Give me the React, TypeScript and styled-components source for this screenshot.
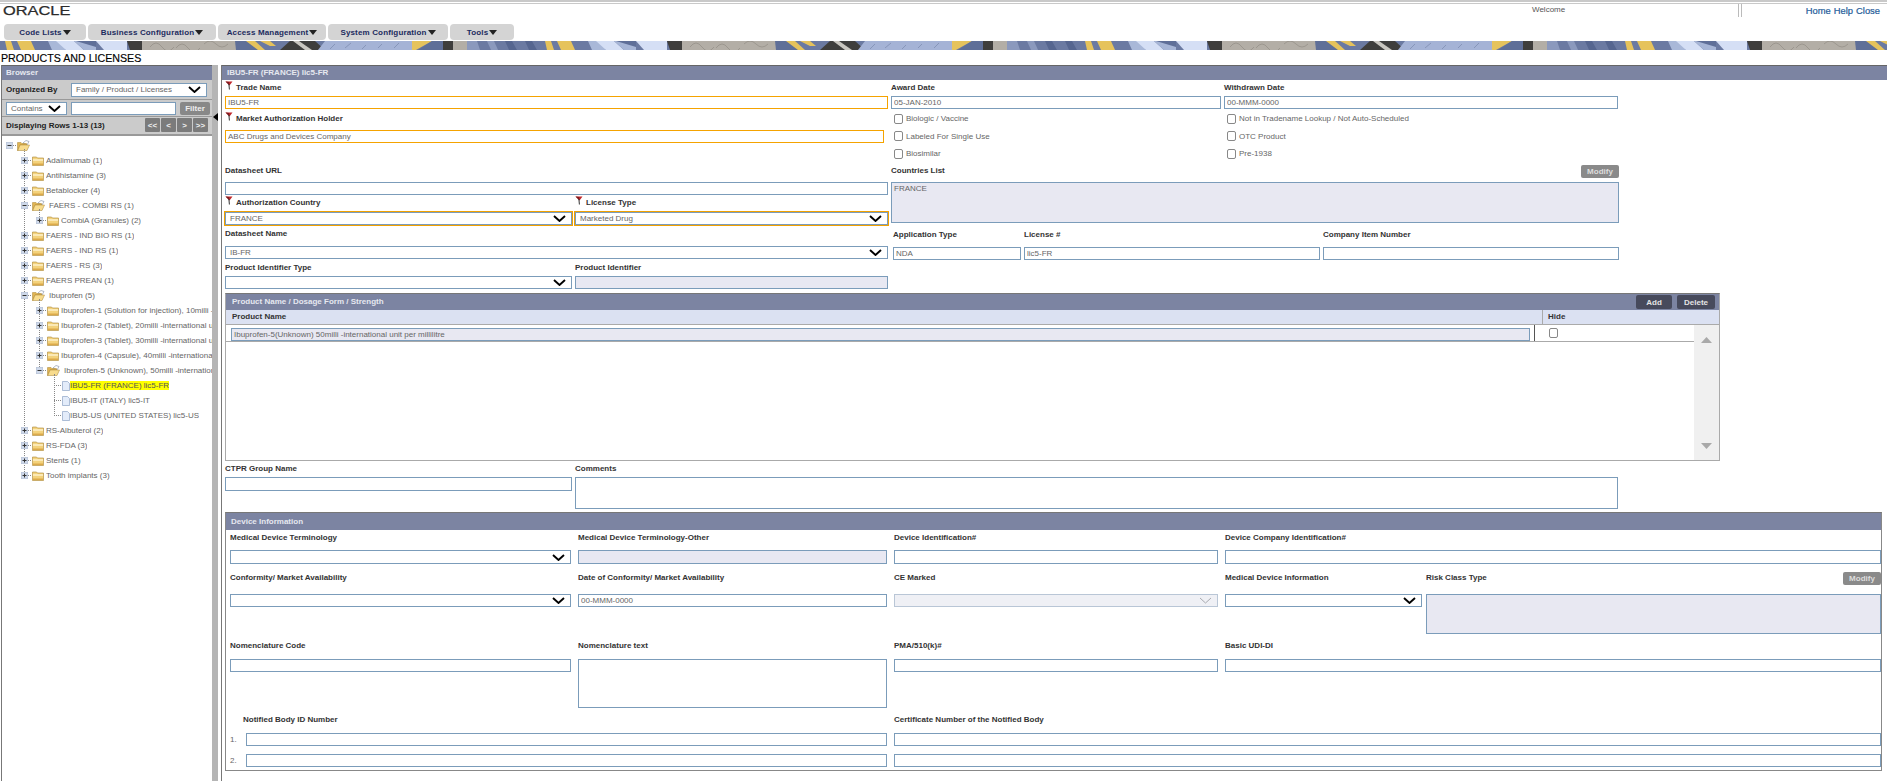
import styled, { createGlobalStyle } from "styled-components"

const GlobalStyle = createGlobalStyle`
    html, body, #root {
        margin: 0;
        height: 100%;
    }

    body {
        background: #fff;
        font-family: "Liberation Sans", Arial, sans-serif;
        font-size: 8px;
        color: #666;
        overflow: hidden;
    }

    * {
        box-sizing: border-box;
    }
`

type TreeNode = {
    label: string
    children?: TreeNode[]
    open?: boolean
    leaf?: boolean
    selected?: boolean
}

const treeData: TreeNode[] = [
    { label: "Adalimumab (1)" },
    { label: "Antihistamine (3)" },
    { label: "Betablocker (4)" },
    {
        label: "FAERS - COMBI RS (1)",
        open: true,
        children: [{ label: "CombiA (Granules) (2)" }],
    },
    { label: "FAERS - IND BIO RS (1)" },
    { label: "FAERS - IND RS (1)" },
    { label: "FAERS - RS (3)" },
    { label: "FAERS PREAN (1)" },
    {
        label: "Ibuprofen (5)",
        open: true,
        children: [
            { label: "Ibuprofen-1 (Solution for injection), 10milli -international unit per millilitre" },
            { label: "Ibuprofen-2 (Tablet), 20milli -international unit per millilitre" },
            { label: "Ibuprofen-3 (Tablet), 30milli -international unit per millilitre" },
            { label: "Ibuprofen-4 (Capsule), 40milli -international unit per millilitre" },
            {
                label: "Ibuprofen-5 (Unknown), 50milli -international unit per millilitre",
                open: true,
                children: [
                    { label: "IBU5-FR (FRANCE) lic5-FR", leaf: true, selected: true },
                    { label: "IBU5-IT (ITALY) lic5-IT", leaf: true },
                    { label: "IBU5-US (UNITED STATES) lic5-US", leaf: true },
                ],
            },
        ],
    },
    { label: "RS-Albuterol (2)" },
    { label: "RS-FDA (3)" },
    { label: "Stents (1)" },
    { label: "Tooth implants (3)" },
]

const menus = [
    { label: "Code Lists", width: 82 },
    { label: "Business Configuration", width: 128 },
    { label: "Access Management", width: 108 },
    { label: "System Configuration", width: 120 },
    { label: "Tools", width: 64 },
]

function Chevron({ muted }: { muted?: boolean }) {
    return (
        <svg width="13" height="7" viewBox="0 0 13 7">
            <path
                d="M1 1 L6.5 6 L12 1"
                fill="none"
                stroke={muted ? "#a8aab0" : "#000"}
                strokeWidth={muted ? 1 : 1.9}
            />
        </svg>
    )
}

function Flag() {
    return (
        <FlagIcon width="8" height="9" viewBox="0 0 8 9">
            <path d="M0.5 0.5 L7.5 0.5 L4.5 4.5 Z" fill="#c0262a" />
            <path d="M0.5 0.5 L4 1 L4.5 4.5 Z" fill="#7b1c1f" />
            <path d="M3.9 3 L4.4 8.5" stroke="#333" strokeWidth="1" />
        </FlagIcon>
    )
}

function Expander({ open }: { open?: boolean }) {
    return (
        <svg width="7" height="7" viewBox="0 0 7 7">
            <rect x="0" y="0" width="7" height="7" rx="1" fill="#cfd9ea" stroke="#a9b6cc" strokeWidth="0.8" />
            <path d="M1.5 3.5 H5.5" stroke="#333" strokeWidth="1" />
            {!open && <path d="M3.5 1.5 V5.5" stroke="#333" strokeWidth="1" />}
        </svg>
    )
}

function FolderIcon({ open }: { open?: boolean }) {
    if (open) {
        return (
            <svg width="13" height="11" viewBox="0 0 13 11">
                <path d="M6 3 L9 0.5 L12 1.5 L10 5 Z" fill="#fff" stroke="#7e8aa3" strokeWidth="0.6" />
                <path d="M0.5 2.5 H4 L5 3.5 H9.5 V5 H3 L1 10.5 H0.5 Z" fill="#e0b452" stroke="#a98434" strokeWidth="0.5" />
                <path d="M3 5 H12.5 L10 10.5 H0.8 Z" fill="#f8dc8e" stroke="#a98434" strokeWidth="0.5" />
            </svg>
        )
    }
    return (
        <svg width="12" height="10" viewBox="0 0 12 10">
            <path d="M0.5 1 H4.5 L5.5 2 H11.5 V9.5 H0.5 Z" fill="#f3d27c" stroke="#a98434" strokeWidth="0.6" />
            <path d="M1 3 H11 V5 H1 Z" fill="#fbe9b6" />
            <path d="M1 7.5 H11 V9 H1 Z" fill="#dcaa4a" />
        </svg>
    )
}

function DocIcon() {
    return (
        <svg width="8" height="10" viewBox="0 0 8 10">
            <path d="M0.5 0.5 H5.5 L7.5 2.5 V9.5 H0.5 Z" fill="#e3ecfa" stroke="#8ea5c6" strokeWidth="0.7" />
        </svg>
    )
}

function TreeBranch({ nodes, level }: { nodes: TreeNode[]; level: number }) {
    // the guide line stops at the last sibling, not at whatever hangs below it
    const tailRows = nodes[nodes.length - 1].children?.length ?? 0

    return (
        <Branch $level={level} $tailRows={tailRows}>
            {nodes.map((node) => (
                <li key={node.label}>
                    <TreeRow>
                        {node.leaf ? (
                            <>
                                <LeafTick />
                                <DocIcon />
                            </>
                        ) : (
                            <>
                                <Expander open={node.open} />
                                <RowTick />
                                <FolderIcon open={node.open} />
                            </>
                        )}
                        <TreeLabel $selected={node.selected} $open={node.open} $leaf={node.leaf}>
                            {node.label}
                        </TreeLabel>
                    </TreeRow>
                    {node.children && <TreeBranch nodes={node.children} level={level + 1} />}
                </li>
            ))}
        </Branch>
    )
}

function Banner() {
    return (
        <BannerSvg width="100%" height="9">
            <defs>
                <pattern id="banner-stripes" width="540" height="9" patternUnits="userSpaceOnUse">
                    <rect width="540" height="9" fill="#6b7aa2" />
                    <polygon points="5,0 11,0 14,9 7,9" fill="#e6c35c" />
                    <polygon points="17,0 31,0 35,9 21,9" fill="#e6c35c" />
                    <polygon points="48,0 60,0 66,9 52,9" fill="#a9b8d8" />
                    <polygon points="56,0 74,0 84,9 66,9" fill="#d5dff5" />
                    <polygon points="74,0 96,0 96,9 84,9" fill="#a6b5d6" />
                    <polygon points="76,0 96,0 96,6" fill="#5f6f98" />
                    <polygon points="96,0 127,0 127,9 104,9" fill="#d5dff5" />
                    <polygon points="127,0 142,0 147,9 130,9" fill="#3f3e3c" />
                    <rect x="142" y="0" width="94" height="9" fill="#b3aea6" />
                    <path d="M150 6 q6 -8 12 0 t12 0 M176 7 q6 -8 12 0 t12 0 M204 3 q6 -6 12 0 t12 0" fill="none" stroke="#9c978f" strokeWidth="1" />
                    <polygon points="235,0 252,0 258,9 236,9" fill="#5f6f98" />
                    <polygon points="246,0 255,0 265,9 258,9" fill="#e6c35c" />
                    <polygon points="260,0 270,0 276,5 270,5" fill="#e6c35c" />
                    <polygon points="280,9 290,0 315,0 325,9" fill="#3f3e3c" />
                    <polygon points="293,0 299,0 312,9 305,9" fill="#c9c6bf" />
                    <polygon points="325,0 412,0 412,9 318,9" fill="#a5b3d6" />
                    <path d="M330 8 l5 -5 M345 7 l6 -5 M362 8 l4 -4 M378 7 l4 -4 M394 7 l5 -5" stroke="#7f8eb3" strokeWidth="0.8" />
                    <polygon points="412,0 432,0 416,9 412,9" fill="#e6c35c" />
                    <polygon points="432,0 443,0 443,9 418,9" fill="#5f6f98" />
                    <rect x="443" y="0" width="10" height="9" fill="#3f3e3c" />
                    <rect x="453" y="0" width="14" height="9" fill="#b3aea6" />
                    <polygon points="467,0 477,0 480,9 467,9" fill="#8b99bd" />
                    <polygon points="487,0 494,0 498,9 491,9" fill="#8b99bd" />
                    <polygon points="505,0 512,0 517,9 509,9" fill="#566690" />
                    <polygon points="525,0 532,0 537,9 529,9" fill="#566690" />
                </pattern>
            </defs>
            <rect width="100%" height="9" fill="url(#banner-stripes)" />
        </BannerSvg>
    )
}

export default function App() {
    return (
        <>
            <GlobalStyle />
            <Page>
                <TopStrip />
                <HeaderRow>
                    <LogoSlot>
                        <Logo>ORACLE</Logo>
                    </LogoSlot>
                    <Welcome>Welcome</Welcome>
                    <HeaderDivider />
                    <HeaderLinks>
                        <span>Home</span>
                        <span>Help</span>
                        <span>Close</span>
                    </HeaderLinks>
                </HeaderRow>
                <MenuBar>
                    {menus.map((menu) => (
                        <MenuTab key={menu.label} $width={menu.width}>
                            {menu.label}
                            <MenuCaret />
                        </MenuTab>
                    ))}
                </MenuBar>
                <Banner />
                <PageTitle>PRODUCTS AND LICENSES</PageTitle>
                <Workspace>
                    <BrowserPane>
                        <PaneHeader>Browser</PaneHeader>
                        <ToolRow $height={20}>
                            <ToolLabel $width={61}>Organized By</ToolLabel>
                            <SelectBox $width={136} $height={14}>
                                Family / Product / Licenses
                                <Chevron />
                            </SelectBox>
                        </ToolRow>
                        <ToolRow $height={17}>
                            <SelectBox $width={61} $height={13}>
                                Contains
                                <Chevron />
                            </SelectBox>
                            <TextInput $width={105} $indent={4} readOnly />
                            <FilterButton>Filter</FilterButton>
                        </ToolRow>
                        <PagerRow>
                            <ToolLabel>Displaying Rows 1-13 (13)</ToolLabel>
                            <PagerButtons>
                                <PagerButton>&lt;&lt;</PagerButton>
                                <PagerButton>&lt;</PagerButton>
                                <PagerButton>&gt;</PagerButton>
                                <PagerButton>&gt;&gt;</PagerButton>
                            </PagerButtons>
                        </PagerRow>
                        <TreeArea>
                            <RootRow>
                                <Expander open />
                                <RowTick />
                                <FolderIcon open />
                            </RootRow>
                            <TreeBranch nodes={treeData} level={0} />
                        </TreeArea>
                    </BrowserPane>
                    <Splitter>
                        <SplitterArrow />
                    </Splitter>
                    <DetailPane>
                        <PaneHeader $indent={5}>IBU5-FR (FRANCE) lic5-FR</PaneHeader>
                        <TopForm>
                            <FormColumn $width={663}>
                                <Label $h={16} $gap={3}>
                                    <Flag />
                                    Trade Name
                                </Label>
                                <TextInput $required defaultValue="IBU5-FR" readOnly />
                                <Label $h={21} $gap={6}>
                                    <Flag />
                                    Market Authorization Holder
                                </Label>
                                <TextInput $required $width={659} defaultValue="ABC Drugs and Devices Company" readOnly />
                                <Label $h={39} $gap={6}>Datasheet URL</Label>
                                <TextInput readOnly />
                                <SplitRow>
                                    <Field $width={347}>
                                        <Label $h={17} $gap={4}>
                                            <Flag />
                                            Authorization Country
                                        </Label>
                                        <SelectBox $required>
                                            FRANCE
                                            <Chevron />
                                        </SelectBox>
                                    </Field>
                                    <Field $width={313}>
                                        <Label $h={17} $gap={4}>
                                            <Flag />
                                            License Type
                                        </Label>
                                        <SelectBox $required>
                                            Marketed Drug
                                            <Chevron />
                                        </SelectBox>
                                    </Field>
                                </SplitRow>
                                <Label $h={21} $gap={7}>Datasheet Name</Label>
                                <SelectBox>
                                    IB-FR
                                    <Chevron />
                                </SelectBox>
                                <SplitRow>
                                    <Field $width={347}>
                                        <Label $h={17} $gap={3}>Product Identifier Type</Label>
                                        <SelectBox>
                                            <span />
                                            <Chevron />
                                        </SelectBox>
                                    </Field>
                                    <Field $width={313}>
                                        <Label $h={17} $gap={3}>Product Identifier</Label>
                                        <TextInput $filled readOnly />
                                    </Field>
                                </SplitRow>
                            </FormColumn>
                            <FormColumn $width={728}>
                                <SplitRow>
                                    <Field $width={330}>
                                        <Label $h={16} $gap={3}>Award Date</Label>
                                        <TextInput defaultValue="05-JAN-2010" readOnly />
                                    </Field>
                                    <Field $width={394}>
                                        <Label $h={16} $gap={3}>Withdrawn Date</Label>
                                        <TextInput defaultValue="00-MMM-0000" readOnly />
                                    </Field>
                                </SplitRow>
                                <CheckGrid>
                                    <CheckItem><Check type="checkbox" readOnly />Biologic / Vaccine</CheckItem>
                                    <CheckItem><Check type="checkbox" readOnly />Not in Tradename Lookup / Not Auto-Scheduled</CheckItem>
                                    <CheckItem><Check type="checkbox" readOnly />Labeled For Single Use</CheckItem>
                                    <CheckItem><Check type="checkbox" readOnly />OTC Product</CheckItem>
                                    <CheckItem><Check type="checkbox" readOnly />Biosimilar</CheckItem>
                                    <CheckItem><Check type="checkbox" readOnly />Pre-1938</CheckItem>
                                </CheckGrid>
                                <LabelRow $height={20}>
                                    <Label $h={20} $gap={6}>Countries List</Label>
                                    <ModifyButton>Modify</ModifyButton>
                                </LabelRow>
                                <TextBlock $height={41} $filled defaultValue="FRANCE" readOnly />
                                <ApplicationGrid>
                                    <Field>
                                        <Label $h={24} $gap={7}>Application Type</Label>
                                        <TextInput defaultValue="NDA" readOnly />
                                    </Field>
                                    <Field>
                                        <Label $h={24} $gap={7}>License #</Label>
                                        <TextInput defaultValue="lic5-FR" readOnly />
                                    </Field>
                                    <Field>
                                        <Label $h={24} $gap={7}>Company Item Number</Label>
                                        <TextInput readOnly />
                                    </Field>
                                </ApplicationGrid>
                            </FormColumn>
                        </TopForm>
                        <ProductSection>
                            <SectionHeader>
                                <SectionTitle>Product Name / Dosage Form / Strength</SectionTitle>
                                <SectionActions>
                                    <DarkButton $width={36}>Add</DarkButton>
                                    <DarkButton $width={38}>Delete</DarkButton>
                                </SectionActions>
                            </SectionHeader>
                            <ColumnHeader>
                                <ColumnName>Product Name</ColumnName>
                                <ColumnHide>Hide</ColumnHide>
                            </ColumnHeader>
                            <ProductBody>
                                <ProductRows>
                                    <ProductRow>
                                        <ProductNameCell>
                                            <TextInput $filled $indent={2} defaultValue="Ibuprofen-5(Unknown) 50milli -international unit per millilitre" readOnly />
                                        </ProductNameCell>
                                        <ProductHideCell>
                                            <Check type="checkbox" readOnly />
                                        </ProductHideCell>
                                    </ProductRow>
                                </ProductRows>
                                <ScrollTrack>
                                    <svg width="11" height="6" viewBox="0 0 11 6">
                                        <polygon points="5.5,0 11,6 0,6" fill="#a9a9a9" />
                                    </svg>
                                    <svg width="11" height="6" viewBox="0 0 11 6">
                                        <polygon points="0,0 11,0 5.5,6" fill="#a9a9a9" />
                                    </svg>
                                </ScrollTrack>
                            </ProductBody>
                        </ProductSection>
                        <CommentRow>
                            <Field $width={347}>
                                <Label $h={16} $gap={3}>CTPR Group Name</Label>
                                <TextInput $height={14} readOnly />
                            </Field>
                            <Field $width={1043}>
                                <Label $h={16} $gap={3}>Comments</Label>
                                <TextBlock $height={32} readOnly />
                            </Field>
                        </CommentRow>
                        <DeviceSection>
                            <DeviceHeader>Device Information</DeviceHeader>
                            <DeviceGrid>
                                <Field>
                                    <Label $h={20} $gap={7}>Medical Device Terminology</Label>
                                    <SelectBox $height={14}>
                                        <span />
                                        <Chevron />
                                    </SelectBox>
                                </Field>
                                <Field>
                                    <Label $h={20} $gap={7}>Medical Device Terminology-Other</Label>
                                    <TextInput $filled $height={14} readOnly />
                                </Field>
                                <Field>
                                    <Label $h={20} $gap={7}>Device Identification#</Label>
                                    <TextInput $height={14} readOnly />
                                </Field>
                                <Field>
                                    <Label $h={20} $gap={7}>Device Company Identification#</Label>
                                    <TextInput $height={14} readOnly />
                                </Field>

                                <Field>
                                    <Label $h={30} $gap={11}>Conformity/ Market Availability</Label>
                                    <SelectBox>
                                        <span />
                                        <Chevron />
                                    </SelectBox>
                                </Field>
                                <Field>
                                    <Label $h={30} $gap={11}>Date of Conformity/ Market Availability</Label>
                                    <TextInput defaultValue="00-MMM-0000" readOnly />
                                </Field>
                                <Field>
                                    <Label $h={30} $gap={11}>CE Marked</Label>
                                    <SelectBox $disabled>
                                        <span />
                                        <Chevron muted />
                                    </SelectBox>
                                </Field>
                                <RiskCell>
                                    <Field $width={197}>
                                        <Label $h={30} $gap={11}>Medical Device Information</Label>
                                        <SelectBox>
                                            <span />
                                            <Chevron />
                                        </SelectBox>
                                    </Field>
                                    <Field $width={455}>
                                        <LabelRow $height={30}>
                                            <Label $h={30} $gap={11}>Risk Class Type</Label>
                                            <ModifyButton $raised>Modify</ModifyButton>
                                        </LabelRow>
                                        <TextBlock $height={40} $filled readOnly />
                                    </Field>
                                </RiskCell>

                                <Field>
                                    <Label $h={25} $gap={8}>Nomenclature Code</Label>
                                    <TextInput readOnly />
                                </Field>
                                <Field>
                                    <Label $h={25} $gap={8}>Nomenclature text</Label>
                                    <TextBlock $height={49} readOnly />
                                </Field>
                                <Field>
                                    <Label $h={25} $gap={8}>PMA/510(k)#</Label>
                                    <TextInput readOnly />
                                </Field>
                                <Field>
                                    <Label $h={25} $gap={8}>Basic UDI-DI</Label>
                                    <TextInput readOnly />
                                </Field>
                            </DeviceGrid>
                            <NotifiedGrid>
                                <NotifiedTitle $h={25} $gap={8}>Notified Body ID Number</NotifiedTitle>
                                <Label $h={25} $gap={8}>Certificate Number of the Notified Body</Label>
                            </NotifiedGrid>
                            <NotifiedGrid $rowGap={8}>
                                <NumberedInput>
                                    <RowNumber>1.</RowNumber>
                                    <TextInput readOnly />
                                </NumberedInput>
                                <TextInput readOnly />
                                <NumberedInput>
                                    <RowNumber>2.</RowNumber>
                                    <TextInput readOnly />
                                </NumberedInput>
                                <TextInput readOnly />
                            </NotifiedGrid>
                        </DeviceSection>
                    </DetailPane>
                </Workspace>
            </Page>
        </>
    )
}

const Page = styled.div`
    height: 100%;
    display: flex;
    flex-direction: column;
    overflow: hidden;
`

const TopStrip = styled.div`
    height: 4px;
    flex: none;
    background: #fff;
    border-top: 2px solid #c9c9c9;
    border-bottom: 1px solid #c9c9c9;
`

const HeaderRow = styled.div`
    height: 20px;
    flex: none;
    display: flex;
    align-items: flex-start;
`

const LogoSlot = styled.div`
    width: 1532px;
    padding-left: 3px;
`

const Logo = styled.div`
    font-size: 12.5px;
    line-height: 13px;
    margin-top: 1px;
    color: #2b2b2b;
    -webkit-text-stroke: 0.25px #2b2b2b;
    transform: scaleX(1.31);
    transform-origin: left center;
`

const Welcome = styled.div`
    width: 206px;
    font-size: 8px;
    line-height: 12px;
    color: #555;
`

const HeaderDivider = styled.div`
    width: 4px;
    height: 13px;
    border-left: 1px solid #bbb;
    border-right: 1px solid #bbb;
`

const HeaderLinks = styled.div`
    width: 141px;
    padding-right: 3px;
    display: flex;
    justify-content: flex-end;
    gap: 3px;
    font-size: 9.4px;
    line-height: 13px;
    color: #1f5c99;
    -webkit-text-stroke: 0.2px #1f5c99;
`

const MenuBar = styled.div`
    height: 17px;
    flex: none;
    padding-left: 4px;
    display: flex;
    gap: 2px;
`

const MenuTab = styled.div<{ $width: number }>`
    width: ${(p) => p.$width}px;
    height: 16px;
    background: #d4d4d4;
    border-radius: 4px;
    display: flex;
    align-items: center;
    justify-content: center;
    font-size: 8px;
    font-weight: 700;
    letter-spacing: 0.15px;
    color: #1c2b5e;
`

const MenuCaret = styled.span`
    margin-left: 1px;
    width: 0;
    height: 0;
    border-left: 4.5px solid transparent;
    border-right: 4.5px solid transparent;
    border-top: 5px solid #222;
`

const BannerSvg = styled.svg`
    display: block;
    flex: none;
`

const PageTitle = styled.h1`
    margin: 0;
    height: 15px;
    flex: none;
    padding: 3px 0 0 1px;
    font-size: 10.67px;
    line-height: 11px;
    font-weight: 400;
    color: #000;
    -webkit-text-stroke: 0.15px #000;
`

const Workspace = styled.div`
    flex: 1;
    min-height: 0;
    display: flex;
`

const BrowserPane = styled.div`
    width: 211px;
    margin-left: 1px;
    flex: none;
    display: flex;
    flex-direction: column;
    border-left: 1px solid #777;
`

const PaneHeader = styled.div<{ $indent?: number }>`
    height: 15px;
    flex: none;
    padding-left: ${(p) => p.$indent ?? 4}px;
    background: #7c84a2;
    border-top: 1px solid #666;
    font-size: 8px;
    line-height: 14px;
    font-weight: 700;
    color: #e6e8f0;
`

const ToolRow = styled.div<{ $height: number }>`
    height: ${(p) => p.$height}px;
    flex: none;
    display: flex;
    align-items: center;
    gap: 4px;
    padding-left: 4px;
    background: #cbcbcb;
    border-bottom: 1px solid #999;
`

const ToolLabel = styled.span<{ $width?: number }>`
    ${(p) => (p.$width ? `width: ${p.$width}px;` : "")}
    font-size: 8px;
    font-weight: 700;
    color: #222;
`

const inputBorder = "#7b9cba"

const SelectBox = styled.div<{
    $width?: number
    $height?: number
    $required?: boolean
    $disabled?: boolean
}>`
    width: ${(p) => (p.$width ? `${p.$width}px` : "100%")};
    height: ${(p) => p.$height ?? 13}px;
    flex: none;
    display: flex;
    align-items: center;
    justify-content: space-between;
    padding: 0 5px 0 4px;
    font-size: 8px;
    color: #666;
    background: ${(p) => (p.$disabled ? "#eff0f5" : "#fff")};
    border: 1px solid ${(p) => (p.$disabled ? "#b9c6d6" : inputBorder)};
    ${(p) => (p.$required ? "outline: 1px solid #f2a100; outline-offset: 0;" : "")}
`

const TextInput = styled.input<{
    $width?: number
    $height?: number
    $required?: boolean
    $filled?: boolean
    $indent?: number
}>`
    display: block;
    width: ${(p) => (p.$width ? `${p.$width}px` : "100%")};
    height: ${(p) => p.$height ?? 13}px;
    flex: none;
    padding: 0 0 0 ${(p) => p.$indent ?? 2}px;
    margin: 0;
    font-family: inherit;
    font-size: 8px;
    color: #666;
    background: ${(p) => (p.$filled ? "#e8e8f2" : "#fff")};
    border: 1px solid ${(p) => (p.$required ? "#f5a300" : inputBorder)};
    border-radius: 0;
    outline: none;
`

const TextBlock = styled.textarea<{ $height: number; $filled?: boolean }>`
    display: block;
    width: 100%;
    height: ${(p) => p.$height}px;
    padding: 1px 2px;
    margin: 0;
    resize: none;
    font-family: inherit;
    font-size: 8px;
    color: #666;
    background: ${(p) => (p.$filled ? "#e8e8f2" : "#fff")};
    border: 1px solid ${inputBorder};
    border-radius: 0;
    outline: none;
`

const FilterButton = styled.div`
    width: 30px;
    height: 13px;
    background: #888;
    border-radius: 2px;
    display: flex;
    align-items: center;
    justify-content: center;
    font-size: 8px;
    font-weight: 700;
    color: #eee;
`

const PagerRow = styled.div`
    height: 19px;
    flex: none;
    display: flex;
    align-items: flex-start;
    justify-content: space-between;
    padding: 1px 4px 0 4px;
    background: #cbcbcb;
    border-bottom: 2px solid #999;
    line-height: 15px;
`

const PagerButtons = styled.div`
    display: flex;
    gap: 1px;
`

const PagerButton = styled.div`
    width: 15px;
    height: 14px;
    background: #7b7b7b;
    border-radius: 1px;
    display: flex;
    align-items: center;
    justify-content: center;
    font-size: 8px;
    font-weight: 700;
    color: #eee;
`

const TreeArea = styled.div`
    flex: 1;
    min-height: 0;
    overflow: hidden;
    padding: 0 0 0 4px;
    background: #fff;
`

const RootRow = styled.div`
    height: 16px;
    display: flex;
    align-items: center;
    margin-top: 1px;
`

const Branch = styled.ul<{ $level: number; $tailRows: number }>`
    position: relative;
    list-style: none;
    margin: 0 0 0 ${(p) => (p.$level === 0 ? 18 : 15)}px;
    padding: 0;

    &::before {
        content: "";
        position: absolute;
        left: 0;
        top: -4px;
        bottom: ${(p) => 7 + p.$tailRows * 15}px;
        border-left: 1px dotted #888;
    }
`

const TreeRow = styled.div`
    position: relative;
    height: 15px;
    margin-left: -3px;
    display: flex;
    align-items: center;
    white-space: nowrap;

    & > svg {
        flex: none;
    }
`

const RowTick = styled.span`
    width: 3px;
    flex: none;
    margin-right: 1px;
    border-top: 1px dotted #888;
`

const LeafTick = styled.span`
    width: 7px;
    flex: none;
    margin: 0 1px 0 3px;
    border-top: 1px dotted #888;
`

const TreeLabel = styled.span<{ $selected?: boolean; $open?: boolean; $leaf?: boolean }>`
    min-width: 0;
    overflow: hidden;
    margin-left: ${(p) => (p.$leaf ? 0 : p.$open ? 4 : 2)}px;
    font-size: 8px;
    color: ${(p) => (p.$selected ? "#555" : "#666")};
    background: ${(p) => (p.$selected ? "#ffff00" : "transparent")};
`

const Splitter = styled.div`
    width: 6px;
    margin-right: 3px;
    flex: none;
    background: #b5b5b5;
    padding: 48px 0 0 1px;
`

const SplitterArrow = styled.div`
    width: 0;
    height: 0;
    border-top: 4px solid transparent;
    border-bottom: 4px solid transparent;
    border-right: 5px solid #000;
`

const DetailPane = styled.div`
    flex: 1;
    min-width: 0;
    border-left: 1px solid #777;
    display: flex;
    flex-direction: column;
`

const TopForm = styled.div`
    padding-left: 3px;
    display: flex;
    gap: 3px;
    align-items: flex-start;
`

const FormColumn = styled.div<{ $width: number }>`
    width: ${(p) => p.$width}px;
    flex: none;
`

const Field = styled.div<{ $width?: number }>`
    ${(p) => (p.$width ? `width: ${p.$width}px; flex: none;` : "min-width: 0;")}
`

const SplitRow = styled.div`
    display: flex;
    gap: 3px;
`

const Label = styled.div<{ $h: number; $gap: number }>`
    height: ${(p) => p.$h}px;
    padding-bottom: ${(p) => p.$gap}px;
    display: flex;
    align-items: flex-end;
    font-size: 8px;
    line-height: 10px;
    font-weight: 700;
    color: #333;
    white-space: nowrap;
`

const FlagIcon = styled.svg`
    margin: 0 3px 3px 0;
    flex: none;
`

const CheckGrid = styled.div`
    height: 53px;
    display: grid;
    grid-template-columns: 333px 1fr;
    grid-auto-rows: 17.5px;
    padding-top: 1px;
`

const CheckItem = styled.label`
    display: flex;
    align-items: center;
    gap: 3px;
    padding-left: 3px;
    font-size: 8px;
    color: #666;
`

const Check = styled.input`
    appearance: none;
    width: 9px;
    height: 10px;
    margin: 0;
    background: #fff;
    border: 1px solid #888;
    border-radius: 2px;
    flex: none;
`

const LabelRow = styled.div<{ $height: number }>`
    height: ${(p) => p.$height}px;
    display: flex;
    justify-content: space-between;
`

const ModifyButton = styled.div<{ $raised?: boolean }>`
    width: 38px;
    height: 13px;
    margin-top: ${(p) => (p.$raised ? 8 : 3)}px;
    background: #8a8a8a;
    border-radius: 2px;
    display: flex;
    align-items: center;
    justify-content: center;
    font-size: 8px;
    font-weight: 700;
    color: #ddd;
`

const ApplicationGrid = styled.div`
    padding-left: 2px;
    display: grid;
    grid-template-columns: 128px 296px 296px;
    gap: 3px;
`

const ProductSection = styled.section`
    width: 1495px;
    height: 168px;
    margin: 4px 0 0 3px;
    flex: none;
    display: flex;
    flex-direction: column;
    border: 1px solid #aaa;
    border-top-color: #777;
`

const SectionHeader = styled.div`
    height: 16px;
    flex: none;
    display: flex;
    align-items: center;
    justify-content: space-between;
    padding: 0 4px 0 6px;
    background: #7c84a2;
    font-size: 8px;
    font-weight: 700;
    color: #e6e8f0;
`

const SectionTitle = styled.span`
    margin-bottom: 2px;
`

const SectionActions = styled.div`
    display: flex;
    gap: 5px;
`

const DarkButton = styled.div<{ $width: number }>`
    width: ${(p) => p.$width}px;
    height: 14px;
    background: #474a5c;
    border-radius: 2px;
    display: flex;
    align-items: center;
    justify-content: center;
    font-size: 8px;
    font-weight: 700;
    color: #e4e4e4;
`

const ColumnHeader = styled.div`
    height: 15px;
    flex: none;
    display: flex;
    background: #dbe1f2;
    border-bottom: 1px solid #aaa;
    font-size: 8px;
    line-height: 14px;
    font-weight: 700;
    color: #333;
`

const ColumnName = styled.div`
    width: 1317px;
    padding-left: 6px;
    border-right: 1px solid #aaa;
`

const ColumnHide = styled.div`
    padding-left: 5px;
`

const ProductBody = styled.div`
    flex: 1;
    min-height: 0;
    display: flex;
`

const ProductRows = styled.div`
    flex: 1;
    min-width: 0;
`

const ProductRow = styled.div`
    height: 17px;
    display: flex;
    border-bottom: 1px solid #aaa;
`

const ProductNameCell = styled.div`
    width: 1309px;
    padding: 3px 4px 0 5px;
    border-right: 1px solid #555;
`

const ProductHideCell = styled.div`
    padding: 3px 0 0 14px;
`

const ScrollTrack = styled.div`
    width: 25px;
    flex: none;
    padding: 12px 0 11px;
    background: #f0f0f0;
    display: flex;
    flex-direction: column;
    align-items: center;
    justify-content: space-between;
`

const CommentRow = styled.div`
    height: 51px;
    padding-left: 3px;
    flex: none;
    display: flex;
    gap: 3px;
`

const DeviceSection = styled.section`
    width: 1657px;
    height: 259px;
    margin-left: 3px;
    flex: none;
    border: 1px solid #888;
    border-top-color: #777;
`

const DeviceHeader = styled.div`
    height: 17px;
    padding-left: 5px;
    background: #7c84a2;
    font-size: 8px;
    line-height: 17px;
    font-weight: 700;
    color: #e6e8f0;
`

const DeviceGrid = styled.div`
    padding-left: 4px;
    display: grid;
    grid-template-columns: 341px 309px 324px 656px;
    column-gap: 7px;
`

const RiskCell = styled.div`
    display: flex;
    gap: 4px;
`

const NotifiedGrid = styled.div<{ $rowGap?: number }>`
    padding-left: 4px;
    display: grid;
    grid-template-columns: 657px 987px;
    column-gap: 7px;
    row-gap: ${(p) => p.$rowGap ?? 0}px;
`

const NotifiedTitle = styled(Label)`
    padding-left: 13px;
`

const NumberedInput = styled.div`
    display: grid;
    grid-template-columns: 16px 1fr;
    align-items: center;
`

const RowNumber = styled.span`
    font-size: 8px;
    color: #666;
`
